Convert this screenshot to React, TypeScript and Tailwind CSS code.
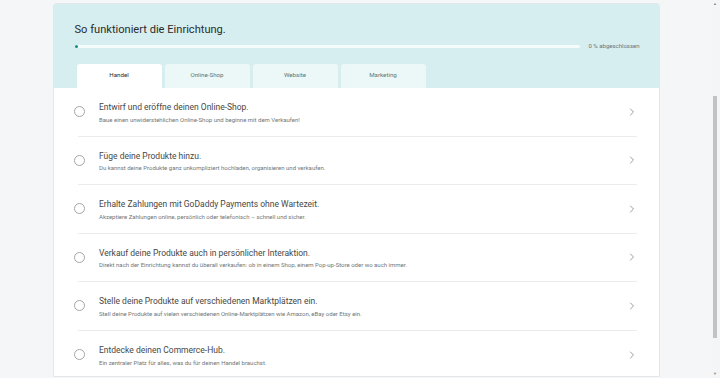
import { ChevronRight } from "lucide-react";

type Step = {
    title: string;
    text: string;
};

const steps: Step[] = [
    {
        title: "Entwirf und eröffne deinen Online-Shop.",
        text: "Baue einen unwiderstehlichen Online-Shop und beginne mit dem Verkaufen!",
    },
    {
        title: "Füge deine Produkte hinzu.",
        text: "Du kannst deine Produkte ganz unkompliziert hochladen, organisieren und verkaufen.",
    },
    {
        title: "Erhalte Zahlungen mit GoDaddy Payments ohne Wartezeit.",
        text: "Akzeptiere Zahlungen online, persönlich oder telefonisch – schnell und sicher.",
    },
    {
        title: "Verkauf deine Produkte auch in persönlicher Interaktion.",
        text: "Direkt nach der Einrichtung kannst du überall verkaufen: ob in einem Shop, einem Pop-up-Store oder wo auch immer.",
    },
    {
        title: "Stelle deine Produkte auf verschiedenen Marktplätzen ein.",
        text: "Stell deine Produkte auf vielen verschiedenen Online-Marktplätzen wie Amazon, eBay oder Etsy ein.",
    },
    {
        title: "Entdecke deinen Commerce-Hub.",
        text: "Ein zentraler Platz für alles, was du für deinen Handel brauchst.",
    },
];

const tabs = ["Handel", "Online-Shop", "Website", "Marketing"];

const StepRow = ({ step, last }: { step: Step; last: boolean }) => (
    <div className={`ml-[24px] mr-[22px] flex h-[48.5px] items-center ${last ? "" : "border-b border-[#ebeded]"}`}>
        <span className="ml-[-3.5px] h-[11px] w-[11px] shrink-0 rounded-full border border-[#a3a7a7]" />
        <div className="ml-[14px] flex min-w-0 flex-1 flex-col pt-[1px]">
            <span className="whitespace-nowrap text-[8.5px] leading-[12px] text-[#474747]">{step.title}</span>
            <span className="mt-[2.5px] whitespace-nowrap text-[6px] leading-[8px] text-[#727676]">{step.text}</span>
        </div>
        <ChevronRight className="mr-[-1px] h-[12px] w-[12px] text-[#9a9e9e]" strokeWidth={2} />
    </div>
);

const App = () => {
    return (
        <div className="flex h-[378px] w-[720px] overflow-hidden bg-[#f5f6f8] font-['Roboto',sans-serif]">
            <div className="flex flex-1 justify-center pt-[3px]">
                <div className="flex h-[374px] w-[607px] flex-col overflow-hidden rounded-t-[3px] border border-[#e4e7e8] bg-white">
                    <header className="bg-[#d7eef0] pl-[21px] pt-[19px]">
                        <h2 className="whitespace-nowrap text-[11.1px] leading-[14px] text-[#2b2b2b]">So funktioniert die Einrichtung.</h2>
                        <div className="mt-[5px] flex h-[8px] items-center">
                            <div className="h-[3px] w-[505px] shrink-0 rounded-full bg-[#f4fbfb]">
                                <div className="h-[3px] w-[3px] rounded-full bg-[#1b8c85]" />
                            </div>
                            <span className="ml-[9px] whitespace-nowrap text-[6px] leading-[8px] text-[#6d7474]">0 % abgeschlossen</span>
                        </div>
                        <nav className="mt-[14px] flex gap-[3px] pl-[2px]">
                            {tabs.map((tab, i) => (
                                <div
                                    key={tab}
                                    className={`flex h-[24px] w-[85px] items-center justify-center rounded-t-[3px] text-[6.2px] ${
                                        i === 0 ? "bg-white text-[#2b2b2b]" : "bg-[#ecf8f8] text-[#5f7676]"
                                    }`}
                                >
                                    {tab}
                                </div>
                            ))}
                        </nav>
                    </header>
                    <div className="flex flex-col">
                        {steps.map((step, i) => (
                            <StepRow key={step.title} step={step} last={i === steps.length - 1} />
                        ))}
                    </div>
                </div>
            </div>
            {/* scrollbar */}
            <div className="flex w-[8px] flex-col items-center bg-[#f4f5f7] pr-[2px]">
                <span className="mt-[2px] text-[4px] leading-[4px] text-[#8a8a8a]">▲</span>
                <div className="mt-[90px] h-[242px] w-[4px] bg-[#c3c3c3]" />
                <span className="mt-auto mb-[2px] text-[4px] leading-[4px] text-[#8a8a8a]">▼</span>
            </div>
        </div>
    );
};

export default App;
